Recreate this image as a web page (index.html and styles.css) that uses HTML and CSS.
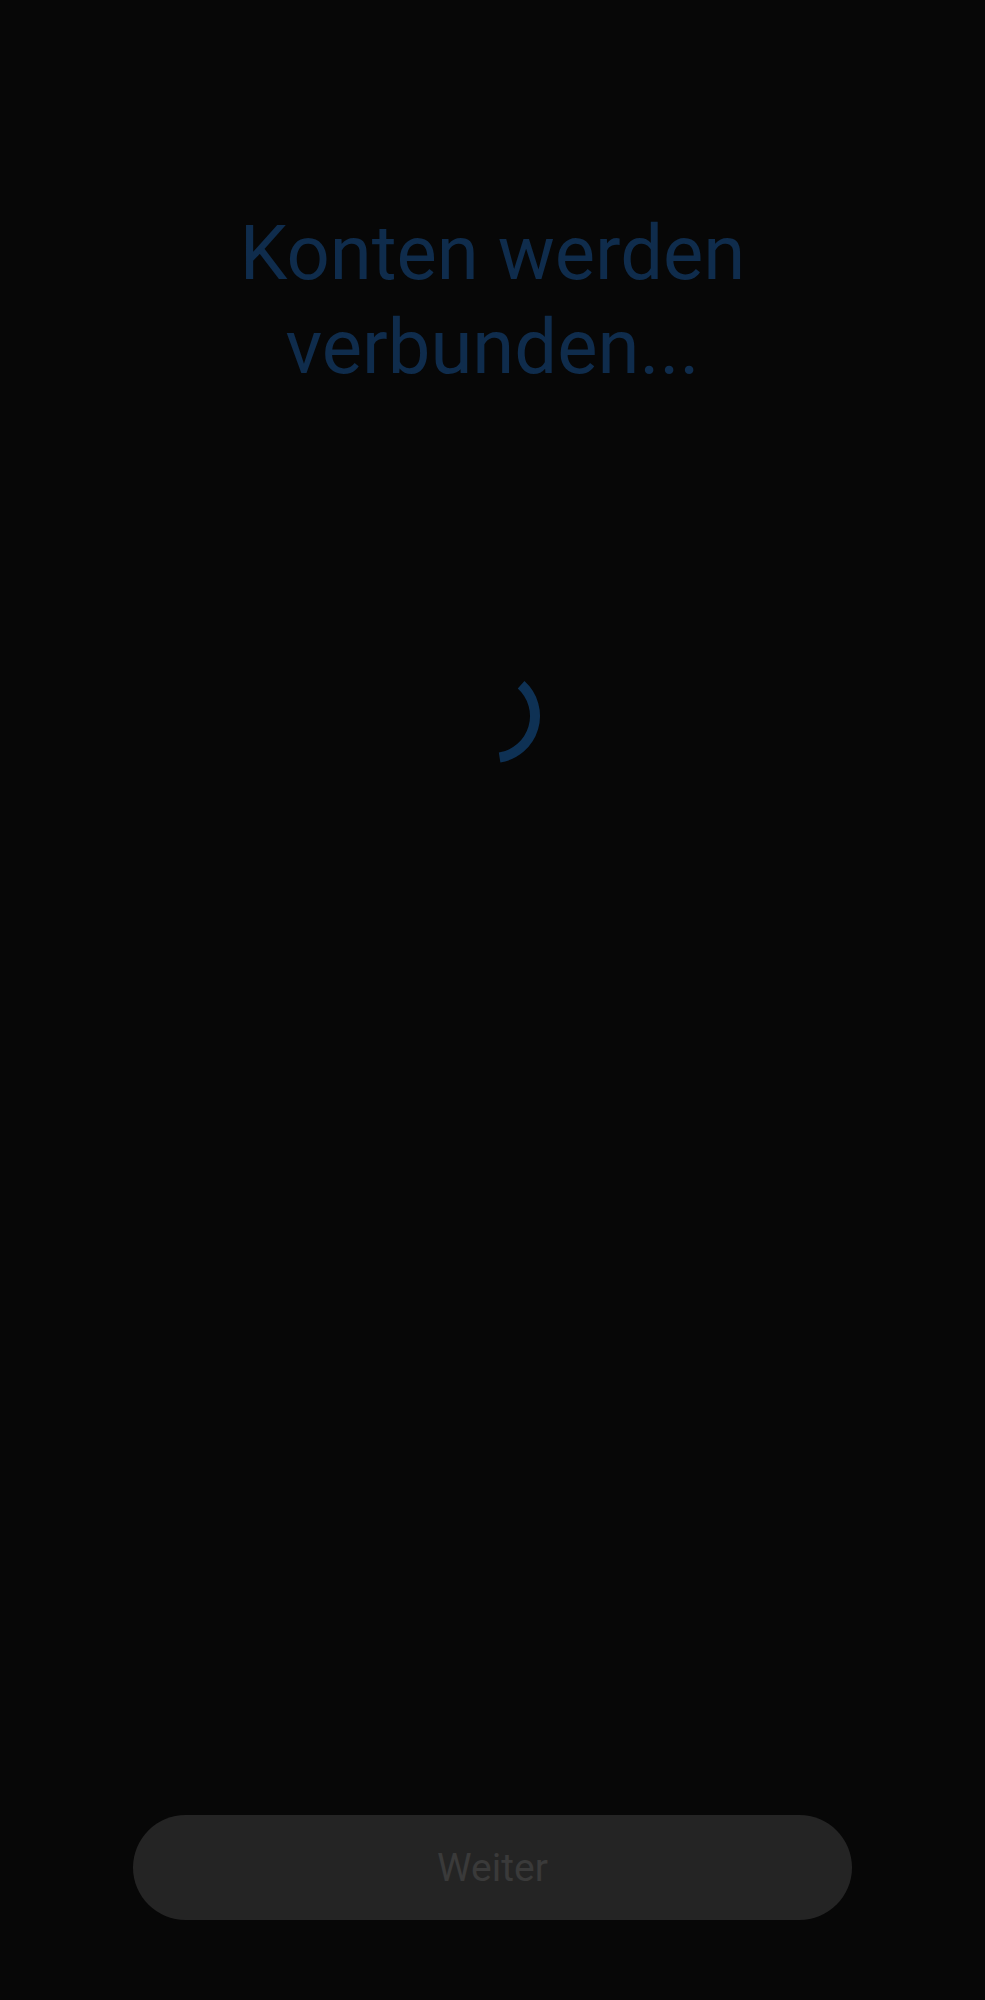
FILE: index.html
```html
<!DOCTYPE html>
<html lang="de">
<head>
<meta charset="utf-8">
<title>Konten werden verbunden…</title>
<link rel="stylesheet" href="styles.css">
</head>
<body>
<main class="screen">
  <h1 class="title">Konten werden<br>verbunden...</h1>
  <div class="spinner">
    <svg viewBox="0 0 100 100" width="100" height="100" aria-hidden="true">
      <path d="M78.1 18.8 A42 42 0 0 1 56.6 91.5" fill="none" stroke="#0e3154" stroke-width="10"/>
    </svg>
  </div>
  <button class="next" type="button" disabled>Weiter</button>
</main>
</body>
</html>
```

FILE: styles.css
```css
html, body {
  margin: 0;
  padding: 0;
  background: #070707;
}
.screen {
  min-height: 2000px;
  display: flex;
  flex-direction: column;
  align-items: center;
  font-family: Roboto, "Noto Sans", sans-serif;
}
.title {
  margin: 206px 0 0;
  font-size: 76px;
  font-weight: 400;
  line-height: 94px;
  text-align: center;
  color: #0f2c4c;
}
.spinner {
  margin-top: 272px;
  width: 100px;
  height: 100px;
}
.spinner svg {
  display: block;
}
.next {
  margin-top: auto;
  margin-bottom: 80px;
  width: 719px;
  height: 105px;
  border: none;
  border-radius: 53px;
  background: #242424;
  color: #3a3a3a;
  font-family: Roboto, "Noto Sans", sans-serif;
  font-size: 39px;
  font-weight: 400;
  padding: 0;
}
```
